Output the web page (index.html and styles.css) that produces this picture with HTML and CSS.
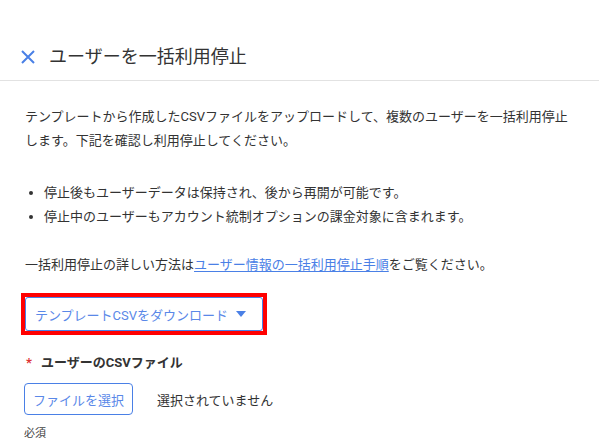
FILE: index.html
```html
<!DOCTYPE html>
<html lang="ja">
<head>
<meta charset="utf-8">
<link rel="stylesheet" href="styles.css">
</head>
<body>
<header class="header">
  <svg class="close" width="14" height="14" viewBox="0 0 14 14"><path d="M1 1L13 13M13 1L1 13" stroke="#4a80e6" stroke-width="2" fill="none"/></svg>
  <h1 class="title">ユーザーを一括利用停止</h1>
</header>
<main class="content">
  <p class="text">テンプレートから作成したCSVファイルをアップロードして、複数のユーザーを一括利用停止します。下記を確認し利用停止してください。</p>
  <ul class="list">
    <li>停止後もユーザーデータは保持され、後から再開が可能です。</li>
    <li>停止中のユーザーもアカウント統制オプションの課金対象に含まれます。</li>
  </ul>
  <p class="text link-line">一括利用停止の詳しい方法は<a class="link" href="#">ユーザー情報の一括利用停止手順</a>をご覧ください。</p>
  <div class="highlight">
    <button class="download">テンプレートCSVをダウンロード<svg class="caret" width="10" height="6" viewBox="0 0 10 6"><path d="M0 0H10L5 6Z" fill="#4a80e6"/></svg></button>
  </div>
  <div class="label"><span class="req">*</span>ユーザーのCSVファイル</div>
  <div class="file-row">
    <button class="file-btn">ファイルを選択</button>
    <span class="file-none">選択されていません</span>
  </div>
  <div class="hint">必須</div>
</main>
</body>
</html>
```
FILE: styles.css
```css
* { box-sizing: border-box; }
body {
  margin: 0;
  font-family: Roboto, "Noto Sans CJK JP", sans-serif;
  color: #333;
  background: #fff;
}
.header {
  display: flex;
  align-items: center;
  gap: 14px;
  padding: 44px 0 10px 21px;
  border-bottom: 1px solid #e2e2e2;
  height: 81px;
}
.close { flex: none; }
.title {
  margin: 0;
  font-size: 18px;
  font-weight: 400;
  line-height: 26px;
  color: #333;
}
.content {
  padding: 24px 20px 0 25px;
}
.text {
  margin: 0;
  font-size: 13px;
  line-height: 24px;
}
.list {
  margin: 28px 0 0;
  padding: 0 0 0 19px;
  font-size: 13px;
  line-height: 24px;
}
.link-line { margin-top: 24px; }
.link { color: #4a80e6; text-decoration: underline; text-underline-offset: 2px; }
.highlight {
  width: fit-content;
  margin: 16px 0 0 -4px;
  border: 4px solid #f00;
}
.download {
  display: flex;
  align-items: center;
  justify-content: space-between;
  width: 238px;
  height: 34px;
  padding: 0 16px 0 9px;
  border: 1px solid #4a80e6;
  border-radius: 3px;
  background: #fff;
  font-family: inherit;
  font-size: 13px;
  color: #5a88e8;
}
.label {
  margin-top: 16px;
  font-size: 13px;
  line-height: 24px;
  font-weight: 700;
  color: #333;
}
.req {
  color: #d33;
  margin: 0 9px 0 1px;
}
.file-row {
  display: flex;
  align-items: center;
  gap: 24px;
  margin-top: 8px;
  margin-left: -1px;
}
.file-btn {
  width: 109px;
  height: 32px;
  border: 1px solid #4a80e6;
  border-radius: 4px;
  background: #fff;
  font-family: inherit;
  font-size: 13px;
  color: #5a88e8;
  padding: 0;
}
.file-none { font-size: 13px; color: #333; }
.hint {
  margin-top: 12px;
  font-size: 11px;
  line-height: 14px;
  color: #444;
  margin-left: -1px;
}
```
